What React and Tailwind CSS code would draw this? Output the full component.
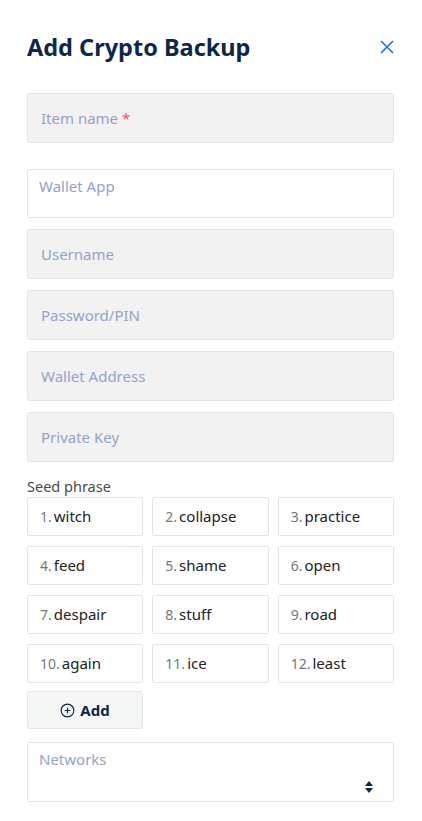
import React from 'react';

const seed = ['witch', 'collapse', 'practice', 'feed', 'shame', 'open', 'despair', 'stuff', 'road', 'again', 'ice', 'least'];

const Field = ({ label, required, className = '' }) => (
    <div className={`h-[50px] w-full rounded-[2px] border border-[#e4e4ef] bg-[#f2f2f2] px-[13px] flex items-center ${className}`}>
        <span className="text-[15px] text-[#94a3c6]">
            {label}
            {required && <span className="text-[#f0506e]"> *</span>}
        </span>
    </div>
);

const App = () => {
    return (
        <div className="min-h-screen bg-white pl-[27px] pr-[28px] pt-[30px]" style={{ fontFamily: '"Noto Sans", "Open Sans", sans-serif' }}>
            <div className="flex items-center justify-between">
                <h1 className="text-[23.5px] font-bold leading-[34px] text-[#0e2749]">Add Crypto Backup</h1>
                <button className="text-[#1b74dc]">
                    <svg width="14" height="14" viewBox="0 0 14 14" fill="none" stroke="currentColor" strokeWidth="1.6">
                        <path d="M1 1L13 13M13 1L1 13" />
                    </svg>
                </button>
            </div>

            <Field label="Item name" required className="mt-[29px]" />

            <div className="mt-[26px] h-[49px] w-full rounded-[2px] border border-[#e4e4ef] bg-white px-[11px] pt-[4px]">
                <span className="text-[15px] text-[#94a3c6]">Wallet App</span>
            </div>

            <div className="mt-[11px] flex flex-col gap-[11px]">
                <Field label="Username" />
                <Field label="Password/PIN" />
                <Field label="Wallet Address" />
                <Field label="Private Key" />
            </div>

            <p className="mt-[14px] text-[14.5px] leading-[20px] text-[#4b4b4b]">Seed phrase</p>

            <div className="mt-[1px] grid grid-cols-3 gap-x-[9px] gap-y-[10px]">
                {seed.map((w, i) => (
                    <div key={w} className="h-[39px] rounded-[2px] border border-[#e4e4ef] bg-white px-[12px] flex items-center text-[15px]">
                        <span className="text-[14px] text-[#777777]">{i + 1}.</span>
                        <span className="ml-[2px] text-[#222222]">{w}</span>
                    </div>
                ))}
            </div>

            <button className="mt-[8px] flex h-[38px] w-[116px] items-center justify-center gap-[5px] rounded-[3px] border border-[#e4e6ea] bg-[#f5f7f7] text-[15px] font-bold text-[#0e2749]">
                <svg width="15" height="15" viewBox="0 0 16 16" fill="none" stroke="currentColor" strokeWidth="1.2">
                    <circle cx="8" cy="8" r="6.8" />
                    <path d="M8 5v6M5 8h6" />
                </svg>
                Add
            </button>

            <div className="relative mt-[13px] h-[60px] w-full rounded-[2px] border border-[#e4e4ef] bg-white px-[11px] pt-[4px]">
                <span className="text-[15px] text-[#94a3c6]">Networks</span>
                <svg className="absolute right-[20px] top-[38px]" width="8" height="12" viewBox="0 0 8 12" fill="#0e2749">
                    <path d="M4 0L8 5H0Z" />
                    <path d="M4 12L8 7H0Z" />
                </svg>
            </div>
        </div>
    );
};

export default App;
